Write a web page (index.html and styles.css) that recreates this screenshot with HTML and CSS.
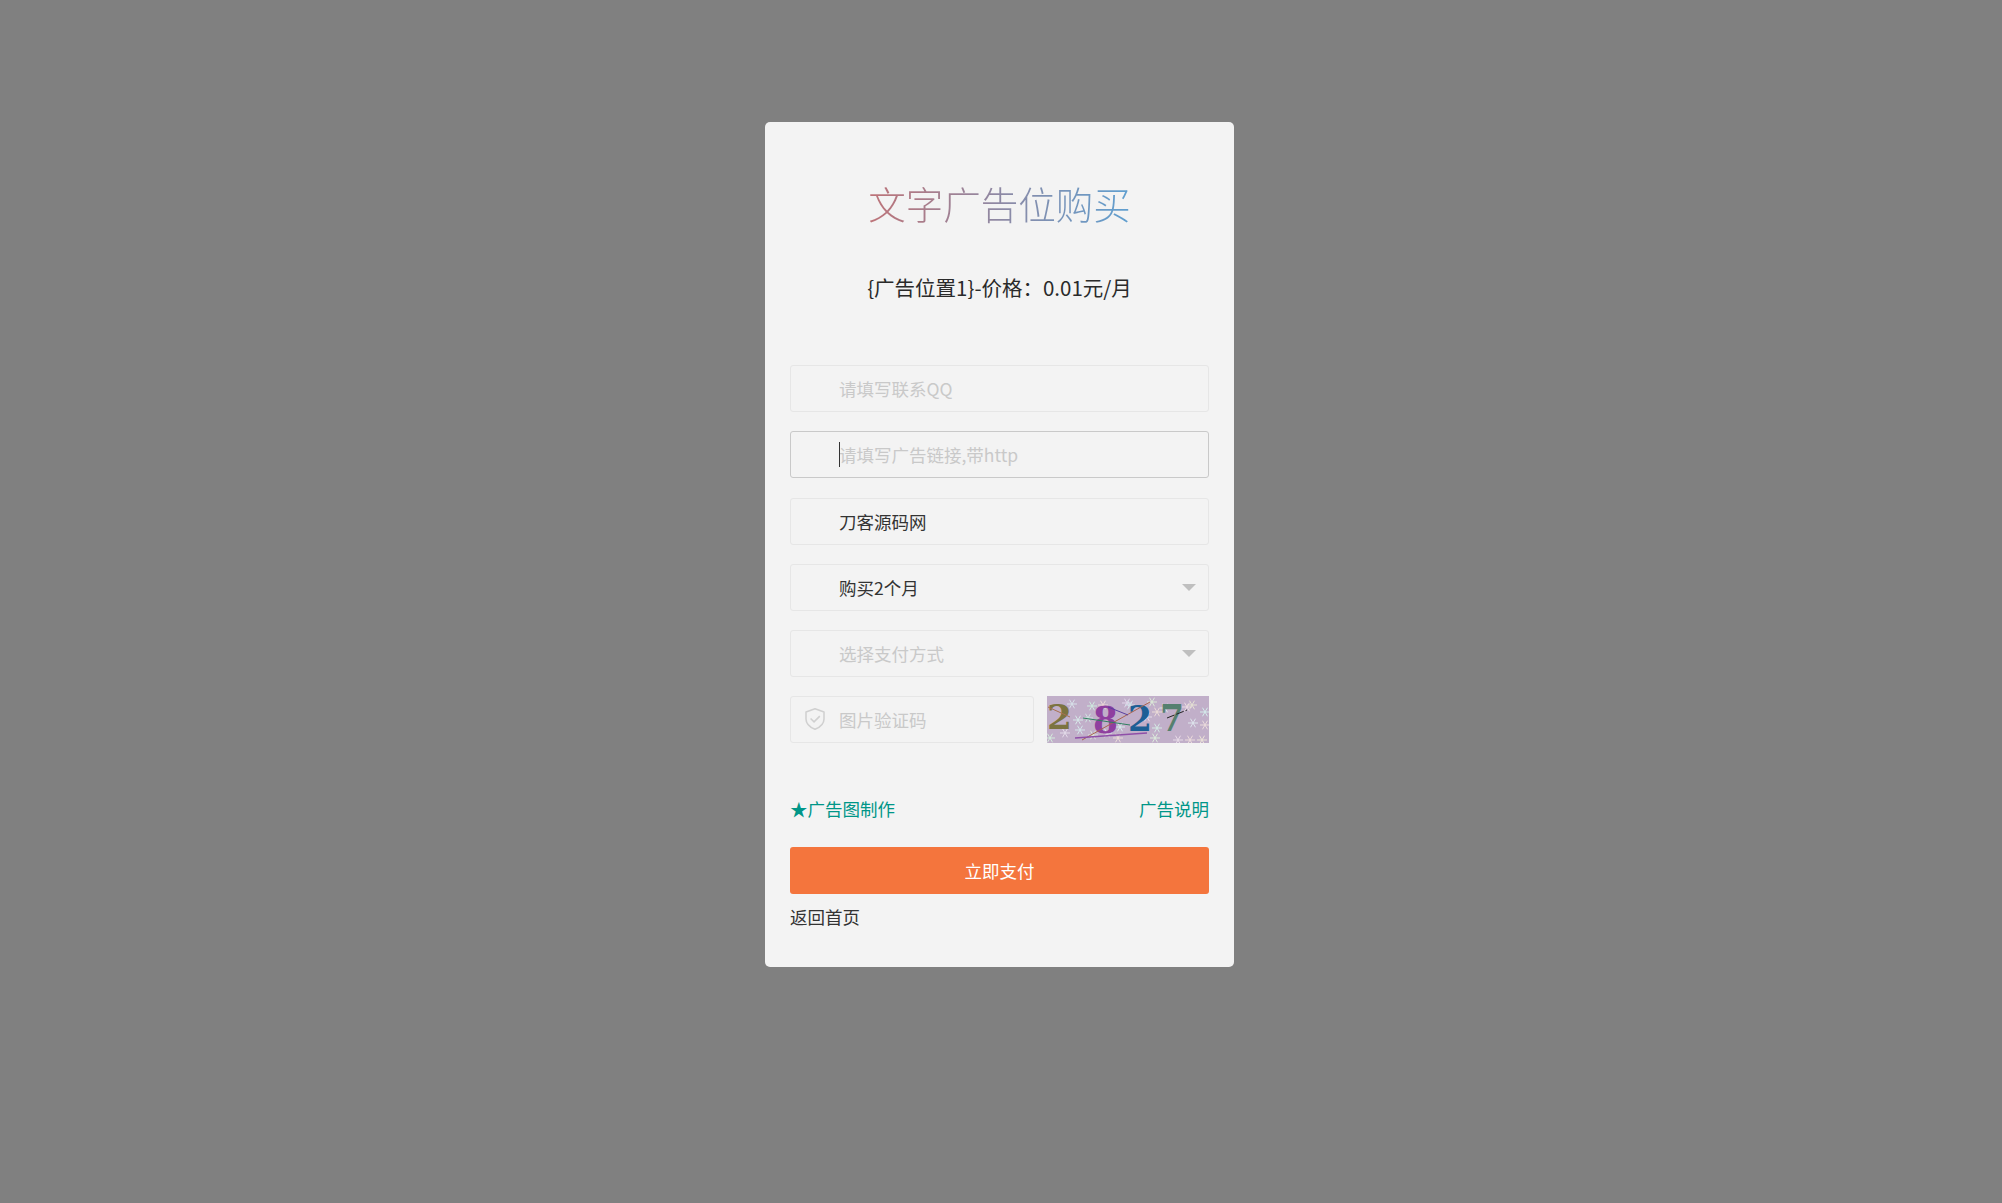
FILE: index.html
```html
<!DOCTYPE html>
<html lang="en">
<head>
    <meta charset="UTF-8">
    <title>文字广告位购买</title>
    <link rel="stylesheet" href="styles.css">
</head>
<body>
    <div class="card">
        <h1 class="title">文字广告位购买</h1>
        <p class="price">{广告位置1}-价格：0.01元/月</p>
        <div class="row">
            <input class="field" type="text" placeholder="请填写联系QQ">
        </div>
        <div class="row">
            <input class="field focus" type="text" placeholder="请填写广告链接,带http">
            <span class="caret"></span>
        </div>
        <div class="row">
            <input class="field" type="text" value="刀客源码网">
        </div>
        <div class="row">
            <div class="field select">购买2个月</div>
            <span class="arrow"></span>
        </div>
        <div class="row">
            <div class="field select empty">选择支付方式</div>
            <span class="arrow"></span>
        </div>
        <div class="code-row">
            <div class="row code">
                <input class="field" type="text" placeholder="图片验证码">
                <svg class="shield" viewBox="0 0 20 20" width="24" height="24">
                    <path d="M10 1.5 L17.5 4.2 V10 C17.5 14.2 14 17 10 18.6 C6 17 2.5 14.2 2.5 10 V4.2 Z" fill="none" stroke="#d0d0d0" stroke-width="1.3" stroke-linejoin="round"/>
                    <path d="M6.3 9.6 L9.2 12.4 L14 7.6" fill="none" stroke="#d0d0d0" stroke-width="1.3"/>
                </svg>
            </div>
            <svg class="captcha" viewBox="0 0 162 47" width="162" height="47">
                <defs>
                    <g id="flake" fill="none" stroke-width="1">
                        <path d="M-5 0 H5 M-2.5 -4.3 L2.5 4.3 M-2.5 4.3 L2.5 -4.3"/>
                    </g>
                </defs>
                <rect width="162" height="47" fill="#c1afc9"/>
                <use href="#flake" x="25" y="8" stroke="#d8e2ea"/>
                <use href="#flake" x="45" y="10" stroke="#cfeadf"/>
                <use href="#flake" x="56" y="9" stroke="#ead9d8"/>
                <use href="#flake" x="80" y="7" stroke="#e2d8ec"/>
                <use href="#flake" x="83" y="9" stroke="#d2e4ea"/>
                <use href="#flake" x="105" y="6" stroke="#dcead8"/>
                <use href="#flake" x="110" y="16" stroke="#ecdcd8"/>
                <use href="#flake" x="118" y="12" stroke="#d8eae6"/>
                <use href="#flake" x="140" y="11" stroke="#ecdce4"/>
                <use href="#flake" x="145" y="9" stroke="#e6e2d4"/>
                <use href="#flake" x="158" y="16" stroke="#d4ecec"/>
                <use href="#flake" x="146" y="27" stroke="#dfe6ee"/>
                <use href="#flake" x="158" y="29" stroke="#ecdcdc"/>
                <use href="#flake" x="3" y="42" stroke="#d4ecdc"/>
                <use href="#flake" x="18" y="37" stroke="#e4dcea"/>
                <use href="#flake" x="33" y="34" stroke="#d4e6ea"/>
                <use href="#flake" x="46" y="39" stroke="#dce8dc"/>
                <use href="#flake" x="60" y="37" stroke="#e8e0ea"/>
                <use href="#flake" x="71" y="42" stroke="#eadcd8"/>
                <use href="#flake" x="108" y="42" stroke="#dcecdc"/>
                <use href="#flake" x="131" y="44" stroke="#e8dce8"/>
                <use href="#flake" x="143" y="44" stroke="#ecdcdc"/>
                <use href="#flake" x="155" y="44" stroke="#ece4d8"/>
                <use href="#flake" x="110" y="32" stroke="#d4eae4"/>
                <use href="#flake" x="73" y="31" stroke="#d8ecec"/>
                <use href="#flake" x="41" y="22" stroke="#cfe4e0"/>
                <use href="#flake" x="31" y="24" stroke="#d8eaea"/>
                <use href="#flake" x="100" y="21" stroke="#e4dcea"/>
                <g font-family="'DejaVu Serif','Liberation Serif',serif" font-weight="bold">
                    <text x="0" y="33" font-size="34" fill="#7c7340" textLength="25" lengthAdjust="spacingAndGlyphs">2</text>
                    <text x="46" y="37" font-size="37" fill="#8f3f9f" textLength="25" lengthAdjust="spacingAndGlyphs">8</text>
                    <text x="81" y="35" font-size="36" fill="#1c5f95" textLength="24" lengthAdjust="spacingAndGlyphs">2</text>
                    <text x="113" y="35" font-size="37" fill="#55806f" textLength="24" lengthAdjust="spacingAndGlyphs">7</text>
                </g>
                <path d="M1 11 L23 21" stroke="#a8704f" fill="none"/>
                <path d="M35 44 L103 6" stroke="#a8654f" fill="none"/>
                <path d="M61 11 L81 19" stroke="#5a3f9f" fill="none"/>
                <path d="M120 22 L140 14" stroke="#222222" fill="none" stroke-dasharray="8 2"/>
                <path d="M28 42 L100 37" stroke="#8f4fa8" fill="none" stroke-width="1.4"/>
                <path d="M36 22 L83 29" stroke="#2f7f5f" fill="none"/>
            </svg>
        </div>
        <div class="links">
            <a class="link" href="#">★广告图制作</a>
            <a class="link" href="#">广告说明</a>
        </div>
        <button class="pay" type="button">立即支付</button>
        <a class="back" href="#">返回首页</a>
    </div>
</body>
</html>
```

FILE: styles.css
```css
html, body {
    height: 100%;
}
body {
    margin: 0;
    padding-right: 3px;
    box-sizing: border-box;
    background-color: #808080;
    font-family: "Noto Sans CJK SC", "Noto Sans", sans-serif;
    font-size: 17.5px;
    color: #333;
}
.card {
    width: 469px;
    height: 845px;
    box-sizing: border-box;
    margin: 122px auto 0;
    padding: 0 25px;
    background-color: #f3f3f3;
    border-radius: 5px;
    overflow: hidden;
}
.title {
    margin: 0;
    padding-top: 52.5px;
    height: 56px;
    line-height: 56px;
    font-size: 37.5px;
    font-weight: 300;
    text-align: center;
    color: transparent;
    background: linear-gradient(to right, #bd7378, #5f9fd0);
    background-size: 262px 100%;
    background-position: center;
    background-repeat: no-repeat;
    -webkit-background-clip: text;
    background-clip: text;
}
.price {
    margin: 43px 0 65.5px;
    height: 26px;
    line-height: 26px;
    font-size: 20.5px;
    text-align: center;
    color: #2a2a2a;
}
.row {
    position: relative;
    margin-bottom: 19.25px;
}
.field {
    display: block;
    width: 100%;
    height: 47px;
    box-sizing: border-box;
    padding: 0 12px 0 48px;
    background: transparent;
    border: 1px solid #e6e6e6;
    border-radius: 3px;
    outline: 0;
    font-family: inherit;
    font-size: 17.5px;
    line-height: 45px;
    color: #333;
}
.field::placeholder {
    color: #c9c9c9;
    opacity: 1;
}
.focus {
    border-color: #c9c9c9;
}
.empty {
    color: #c9c9c9;
}
.caret {
    position: absolute;
    left: 49px;
    top: 11px;
    width: 1px;
    height: 25px;
    background-color: #333;
}
.arrow {
    position: absolute;
    right: 13px;
    top: 20px;
    border-style: solid;
    border-width: 7px 7px 0;
    border-color: #bfbfbf transparent transparent;
}
.code-row {
    display: flex;
    justify-content: space-between;
}
.code {
    width: 244px;
    margin-bottom: 0;
}
.shield {
    position: absolute;
    left: 13px;
    top: 11px;
}
.captcha {
    display: block;
}
.links {
    display: flex;
    justify-content: space-between;
    margin-top: 53px;
    height: 26px;
    line-height: 26px;
}
.link {
    color: #009688;
    text-decoration: none;
}
.pay {
    display: block;
    width: 100%;
    height: 47px;
    margin-top: 24.5px;
    padding: 0;
    border: 0;
    border-radius: 3px;
    background-color: #f4753d;
    color: #fff;
    font-family: inherit;
    font-size: 17.5px;
}
.back {
    display: block;
    margin-top: 10px;
    height: 26px;
    line-height: 26px;
    color: #333;
    text-decoration: none;
}
```
